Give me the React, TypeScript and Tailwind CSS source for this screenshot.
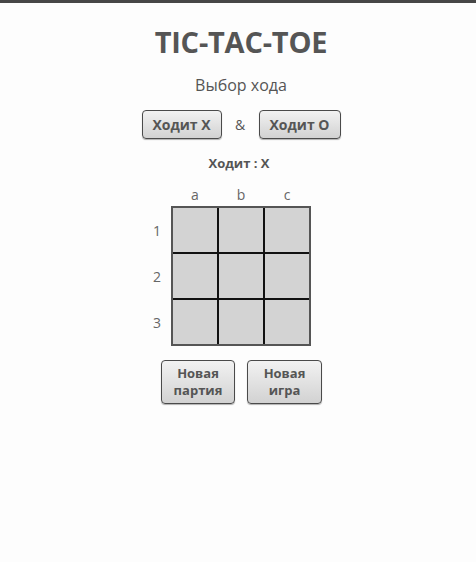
import React from "react";

const btn =
  "border-[1.5px] border-[#4a4a4a] rounded-[4px] bg-gradient-to-b from-[#f2f2f2] to-[#d2d2d2] text-[#555] font-bold shadow-[0_1px_1px_rgba(0,0,0,0.3)]";

export default function App() {
  const cols = ["a", "b", "c"];
  const rows = ["1", "2", "3"];
  return (
    <div className="w-[476px] h-[562px] bg-[#fdfdfd] flex flex-col items-center text-[#555]" style={{ fontFamily: '"Open Sans", "Noto Sans", sans-serif' }}>
      <div className="w-full h-[3px] bg-[#474747]" />
      <h1 className="mt-[21px] ml-[6px] text-[29px] leading-[36px] font-bold text-[#555] tracking-[-0.2px]">TIC-TAC-TOE</h1>
      <div className="mt-[14px] ml-[6px] text-[16px] leading-[22px] text-[#555]">Выбор хода</div>
      <div className="mt-[14px] ml-[6px] flex items-center">
        <button className={`${btn} w-[80px] h-[29px] text-[14px]`}>Ходит X</button>
        <span className="w-[37px] text-center text-[14px]">&amp;</span>
        <button className={`${btn} w-[82px] h-[29px] text-[14px]`}>Ходит O</button>
      </div>
      <div className="mt-[15px] ml-[2px] text-[13px] leading-[18px] font-bold">Ходит : X</div>
      <div className="mt-[11px] ml-[-22px] flex">
        <div className="w-[28px] flex flex-col pt-[23px]">
          {rows.map((r) => (
            <div key={r} className="h-[46px] pt-[17px] text-[14px] leading-[16px] text-[#666] text-left pl-[10px]">{r}</div>
          ))}
        </div>
        <div className="flex flex-col">
          <div className="flex h-[21px] pt-[4px] pl-[1px]">
            {cols.map((c) => (
              <div key={c} className="w-[46px] text-center text-[14px] leading-[16px] text-[#666]">{c}</div>
            ))}
          </div>
          <div className="border-2 border-[#555] bg-[#111] grid grid-cols-[44px_44px_44px] gap-[2px] mt-[2px]">
            {Array.from({ length: 9 }).map((_, i) => (
              <div key={i} className="w-[44px] h-[44px] bg-[#d3d3d3]" />
            ))}
          </div>
        </div>
      </div>
      <div className="mt-[14px] ml-[7px] flex gap-[12px]">
        <button className={`${btn} w-[74px] h-[44px] text-[13px] leading-[17px]`}>Новая<br />партия</button>
        <button className={`${btn} w-[75px] h-[44px] text-[13px] leading-[17px]`}>Новая<br />игра</button>
      </div>
    </div>
  );
}
